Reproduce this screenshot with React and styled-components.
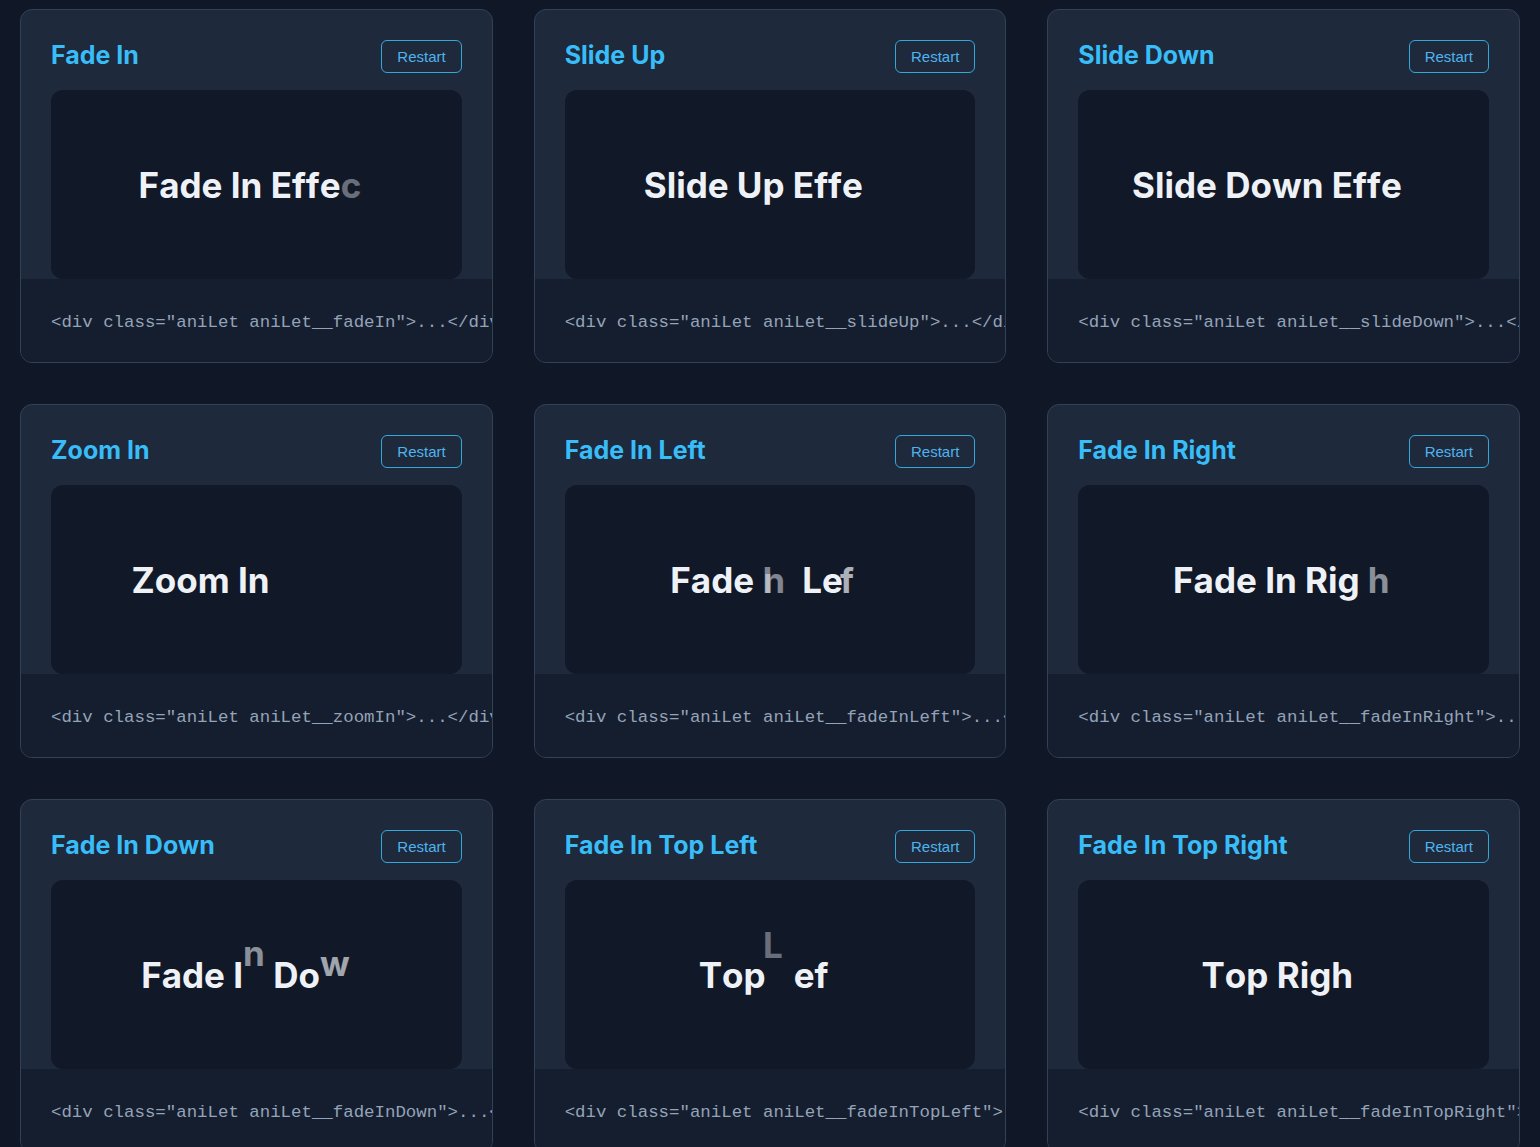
import React from "react";
import styled, { createGlobalStyle } from "styled-components";

const GlobalStyle = createGlobalStyle`
	* {
		box-sizing: border-box;
	}
	body {
		margin: 0;
		background: #101726;
		font-family: Inter, "Noto Sans", sans-serif;
	}
`;

const cards = [
	{ title: "Fade In", cls: "fadeIn", text: "Fade In Effect", fx: { 12: { o: 0.4 }, 13: { o: 0 } } },
	{ title: "Slide Up", cls: "slideUp", text: "Slide Up Effect", fx: { 13: { o: 0 }, 14: { o: 0 } } },
	{ title: "Slide Down", cls: "slideDown", text: "Slide Down Effect", fx: { 15: { o: 0 }, 16: { o: 0 } } },
	{
		title: "Zoom In",
		cls: "zoomIn",
		text: "Zoom In Effect",
		fx: { 8: { o: 0 }, 9: { o: 0 }, 10: { o: 0 }, 11: { o: 0 }, 12: { o: 0 }, 13: { o: 0 } },
	},
	{
		title: "Fade In Left",
		cls: "fadeInLeft",
		text: "Fade In Left",
		fx: { 5: { o: 0.5 }, 6: { o: 0.5, x: -9 }, 10: { o: 0.7, x: -3 }, 11: { o: 0 } },
	},
	{
		title: "Fade In Right",
		cls: "fadeInRight",
		text: "Fade In Right",
		fx: { 11: { o: 0.55, x: 8 }, 12: { o: 0 } },
	},
	{
		title: "Fade In Down",
		cls: "fadeInDown",
		text: "Fade In Down",
		fx: { 6: { o: 0.55, y: -22 }, 10: { o: 0.65, y: -12 }, 11: { o: 0 } },
	},
	{
		title: "Fade In Top Left",
		cls: "fadeInTopLeft",
		text: "Top Left",
		fx: { 4: { o: 0.4, x: -11, y: -30 }, 7: { o: 0 } },
	},
	{ title: "Fade In Top Right", cls: "fadeInTopRight", text: "Top Right", fx: { 8: { o: 0 } } },
];

const App = () => {
	return (
		<>
			<GlobalStyle />
			<Grid>
				{cards.map((card) => (
					<Card key={card.cls}>
						<Body>
							<Header>
								<Title>{card.title}</Title>
								<RestartButton>Restart</RestartButton>
							</Header>
							<Preview>
								<AnimText>
									{card.text.split("").map((ch, i) => {
										const f = card.fx[i] || {};
										return (
											<Letter key={i} $o={f.o ?? 1} $x={f.x || 0} $y={f.y || 0}>
												{ch}
											</Letter>
										);
									})}
								</AnimText>
							</Preview>
						</Body>
						<Code>{`<div class="aniLet aniLet__${card.cls}">...</div>`}</Code>
					</Card>
				))}
			</Grid>
		</>
	);
};

const Grid = styled.main`
	display: grid;
	grid-template-columns: repeat(3, 1fr);
	gap: 41px;
	padding: 9px 20px 20px;
`;

const Card = styled.section`
	background: #1e293b;
	border: 1px solid #334155;
	border-radius: 12px;
	overflow: hidden;
	display: flex;
	flex-direction: column;
`;

const Body = styled.div`
	padding: 30px 30px 0;
	display: flex;
	flex-direction: column;
	gap: 17px;
`;

const Header = styled.div`
	display: flex;
	justify-content: space-between;
	align-items: center;
	height: 33px;
`;

const Title = styled.h3`
	margin: 0 0 3px;
	font-size: 25px;
	font-weight: 700;
	color: #38bdf8;
`;

const RestartButton = styled.button`
	height: 33px;
	padding: 0 15px;
	background: transparent;
	border: 1px solid rgba(56, 189, 248, 0.85);
	border-radius: 6px;
	color: #4fb3ee;
	font-family: "Liberation Sans", Arial, sans-serif;
	font-size: 15px;
	cursor: pointer;
`;

const Preview = styled.div`
	height: 189px;
	background: #111827;
	border-radius: 12px;
	display: flex;
	align-items: center;
	justify-content: center;
	overflow: hidden;
`;

const AnimText = styled.div`
	font-size: 35px;
	font-weight: 700;
	color: #eef2f7;
	white-space: pre;
`;

const Letter = styled.span`
	display: inline-block;
	opacity: ${(p) => p.$o};
	transform: translate(${(p) => p.$x}px, ${(p) => p.$y}px);
`;

const Code = styled.pre`
	margin: 0;
	padding: 32px 0 27px 30px;
	background: #151e2f;
	color: #94a3b8;
	font-family: "Liberation Mono", "DejaVu Sans Mono", monospace;
	font-size: 17.4px;
	line-height: 24px;
	white-space: pre;
	overflow: hidden;
`;

export default App;
